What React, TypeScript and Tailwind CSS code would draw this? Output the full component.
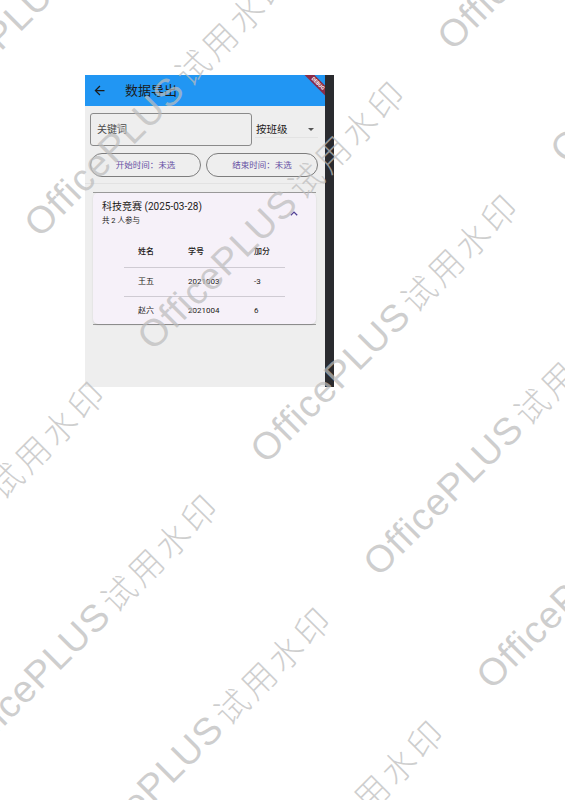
import React from 'react';

// watermark tiling (O-centre of each "OfficePLUS试用水印")
const WM_BASE = { x: 40, y: 220 };
const V1 = { x: 113, y: 113 };
const V2 = { x: 413, y: -187 };

const getWatermarks = () => {
  const spots: { x: number; y: number }[] = [];
  for (let n = -1; n <= 1; n++) {
    for (let m = -4; m <= 8; m++) {
      const x = WM_BASE.x + m * V1.x + n * V2.x;
      const y = WM_BASE.y + m * V1.y + n * V2.y;
      if (x + 270 < 0 || x - 20 > 565 || y + 20 < 0 || y - 275 > 800) continue;
      spots.push({ x, y });
    }
  }
  return spots;
};

const rows = [
  { name: '王五', id: '2021003', score: '-3' },
  { name: '赵六', id: '2021004', score: '6' },
];

const App = () => {
  const marks = getWatermarks();

  return (
    <div className="relative w-[565px] h-[800px] bg-white overflow-hidden font-['Roboto','Noto_Sans_CJK_SC',sans-serif]">
      <div className="pl-[85px] pt-[75px]">
        <div className="flex w-[249px] h-[312px]">
          {/* Phone screen */}
          <div className="w-[240px] h-full bg-[#eeeeee] flex flex-col">
            {/* App bar */}
            <div className="relative h-[31px] shrink-0 bg-[#2196f3] flex items-center overflow-hidden">
              <svg width="15" height="15" viewBox="0 0 24 24" className="ml-[7px]">
                <path d="M20 11H7.83l5.59-5.59L12 4l-8 8 8 8 1.41-1.41L7.83 13H20v-2z" fill="#1b1b1b" />
              </svg>
              <span className="ml-[18px] text-[13px] text-[#1b1b1b] leading-none">数据导出</span>
              <div className="absolute left-[206px] top-[5px] w-[54px] h-[7px] rotate-45 bg-[#8b2c47] flex items-center justify-center">
                <span className="text-[5px] font-bold text-white leading-none">DEBUG</span>
              </div>
            </div>

            {/* Filters */}
            <div className="flex items-center pl-[5px] pr-[7px] pt-[7px] gap-[3px]">
              <div className="w-[162px] h-[33px] border border-[#8a8a8a] rounded-[3px] flex items-center pl-[6px] text-[10px] text-[#494949]">
                关键词
              </div>
              <div className="relative flex-1 h-[33px] flex items-center pl-[1px]">
                <span className="text-[10.5px] text-[#1d1b20]">按班级</span>
                <svg width="6" height="3" viewBox="0 0 6 3" className="ml-auto mr-[4px]">
                  <path d="M0 0h6L3 3z" fill="#555" />
                </svg>
                <div className="absolute left-0 right-0 bottom-[8px] h-px bg-[#e3e3e3]" />
              </div>
            </div>

            <div className="flex gap-[5px] pl-[5px] pr-[7px] mt-[7px]">
              <button className="w-[111px] h-[24px] rounded-full border border-[#7d7d7d] text-[8.5px] text-[#6750a4] flex items-center justify-center">
                开始时间：未选
              </button>
              <button className="flex-1 h-[24px] rounded-full border border-[#7d7d7d] text-[8.5px] text-[#6750a4] flex items-center justify-center">
                结束时间：未选
              </button>
            </div>

            <div className="mt-[6px] h-px bg-[#e2e2e2]" />

            {/* Expanded event card */}
            <div className="mt-[8px] mx-[8px] w-[223px] border-y border-[#9a9a9a]">
              <div className="bg-[#f6f1f9] rounded-[5px] shadow-[0_1px_2px_rgba(0,0,0,0.12)]">
                <div className="flex items-center pt-[7px] pl-[9px] pr-[18px]">
                  <div className="flex-1">
                    <div className="text-[10px] leading-[14px] text-[#1d1b20]">科技竞赛 (2025-03-28)</div>
                    <div className="text-[7.5px] leading-[11px] mt-[1px] text-[#1d1b20]">共 2 人参与</div>
                  </div>
                  <svg width="8" height="5" viewBox="0 0 8 5">
                    <path d="M0.8 4.3L4 1.1l3.2 3.2" fill="none" stroke="#4f4196" strokeWidth="1.3" />
                  </svg>
                </div>

                <div className="mt-[11px] mx-auto w-[161px]">
                  <div className="flex items-center h-[31px] border-b border-[#cfcbd3] pl-[14px] text-[8px] font-medium text-[#1d1b20]">
                    <span className="w-[50px]">姓名</span>
                    <span className="w-[66px]">学号</span>
                    <span className="flex-1">加分</span>
                  </div>
                  {rows.map((r, i) => (
                    <div
                      key={r.id}
                      className={
                        i === 0
                          ? 'flex items-center h-[29px] border-b border-[#cfcbd3] pl-[14px] text-[8px] text-[#1d1b20]'
                          : 'flex items-center h-[27px] pl-[14px] text-[8px] text-[#1d1b20]'
                      }
                    >
                      <span className="w-[50px]">{r.name}</span>
                      <span className="w-[66px]">{r.id}</span>
                      <span className="flex-1">{r.score}</span>
                    </div>
                  ))}
                </div>
              </div>
            </div>
          </div>
          {/* dark side strip */}
          <div className="w-[9px] h-full bg-[#2a2b2f]" />
        </div>
      </div>

      {/* Watermark overlay */}
      <div className="absolute inset-0 pointer-events-none">
        {marks.map((p, i) => (
          <div
            key={i}
            className="absolute h-[38px] whitespace-nowrap leading-[38px] text-[#bcbcbcb8] font-light"
            style={{
              left: p.x - 10,
              top: p.y - 10,
              transform: 'rotate(-45deg)',
              transformOrigin: '0 50%',
            }}
          >
            <span className="text-[38px] tracking-[1px] font-['Liberation_Sans',sans-serif]">OfficePLUS</span>
            <span className="ml-[4px] text-[34px] tracking-[4px] font-['Noto_Sans_CJK_SC',sans-serif]">试用水印</span>
          </div>
        ))}
      </div>
    </div>
  );
};

export default App;
